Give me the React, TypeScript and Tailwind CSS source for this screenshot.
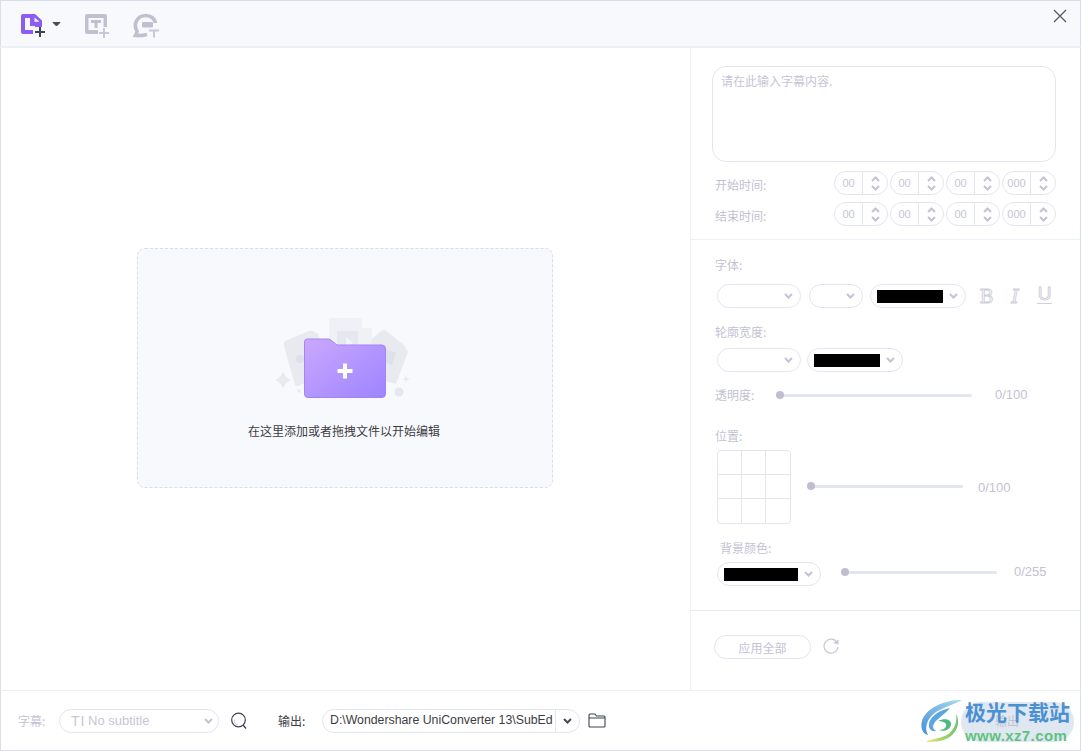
import React from "react";

const font = { fontFamily: '"Noto Sans CJK SC", "Liberation Sans", sans-serif' };
const latin = { fontFamily: '"Liberation Sans", sans-serif' };
const serif = { fontFamily: '"DejaVu Serif", serif' };

function Chevron({ color = "#c4c3d5", className = "" }: { color?: string; className?: string }) {
  return (
    <svg width="9" height="6" viewBox="0 0 9 6" className={className}>
      <path d="M1 1 L4.5 4.5 L8 1" fill="none" stroke={color} strokeWidth="2" />
    </svg>
  );
}

function TimeField({ text }: { text: string }) {
  return (
    <div className="flex h-6 w-[54px] rounded-full border border-[#e3e5f1] bg-white">
      <div style={latin} className="flex w-7 items-center justify-center border-r border-[#e3e5f1] text-[11px] text-[#c6c5d6]">{text}</div>
      <div className="flex flex-1 flex-col items-center justify-center gap-[3px]">
        <Chevron className="rotate-180" />
        <Chevron />
      </div>
    </div>
  );
}

function TimeRow({ label, labelClass }: { label: string; labelClass: string }) {
  return (
    <div className="ml-6 flex h-6 w-[341px] items-center justify-between">
      <span className={`text-xs text-[#c3c2d3] ${labelClass}`}>{label}</span>
      <div className="flex gap-0.5">
        <TimeField text="00" />
        <TimeField text="00" />
        <TimeField text="00" />
        <TimeField text="000" />
      </div>
    </div>
  );
}

function Select({ w, swatch }: { w: string; swatch?: string }) {
  return (
    <div className={`flex h-6 items-center rounded-full border border-[#e3e5f1] bg-white pl-[6px] pr-[7px] ${w}`}>
      {swatch ? <div className={`h-[13px] bg-black ${swatch}`} /> : null}
      <Chevron className="ml-auto" />
    </div>
  );
}

function Slider({ w }: { w: string }) {
  return (
    <div className={`relative h-[3px] rounded-full bg-[#e3e5f1] ${w}`}>
      <div className="absolute -left-1 -top-[2.5px] h-2 w-2 rounded-full bg-[#bfbed0]" />
    </div>
  );
}

function Illustration() {
  return (
    <svg width="140" height="84" viewBox="275 316 140 84">
      <defs>
        <linearGradient id="fg" x1="0" y1="0" x2="1" y2="1">
          <stop offset="0" stopColor="#cba8ff" />
          <stop offset="1" stopColor="#9d84ff" />
        </linearGradient>
      </defs>
      <path d="M285 341 L309 331 Q311 330 313 331 L318 334 L330 372 L298 386 Q296 387 295 385 L284 346 Q283 342 285 341Z" fill="#e8eaf0" />
      <circle cx="300" cy="359" r="4" fill="#dee0e9" />
      <path d="M329 318 H362 L372 328 V375 H329Z" fill="#eff1f7" />
      <path d="M362 318 L372 328 H362Z" fill="#f8f9fd" />
      <path d="M337 331 H358 V358 H337Z" fill="#e6e8f1" />
      <path d="M346 337 L353 343 L346 349Z" fill="#f3f4fa" />
      <path d="M372 339 Q382 329 385 330 L404 345 L408 352 L396 384 L366 376Z" fill="#e8eaf0" />
      <path d="M378 346 L396 353 L392 365 L374 358Z" fill="#dfe1ea" />
      <path d="M283 371 Q285 378 291 380 Q285 382 283 389 Q281 382 275 380 Q281 378 283 371Z" fill="#e8eaf0" />
      <circle cx="299" cy="391" r="1.7" fill="#e8eaf0" />
      <circle cx="399" cy="392" r="4.5" fill="#e5e7ee" />
      <path d="M406 375 L407 378 L410 379 L407 380 L406 383 L405 380 L402 379 L405 378Z" fill="#e8eaf0" />
      <path d="M304.5 342 Q304.5 339 307.5 339 H328 Q330 339 332 341 L337 345 H382 Q385.5 345 385.5 349 V394 Q385.5 397.5 382 397.5 H308 Q304.5 397.5 304.5 394Z" fill="url(#fg)" stroke="#a683f3" strokeWidth="1" />
      <path d="M337.5 371 H352.5 M345 363.5 V378.5" stroke="#fff" strokeWidth="4" />
    </svg>
  );
}

function Logo() {
  return (
    <svg width="44" height="44" viewBox="0 0 44 44" className="shrink-0">
      <defs>
        <linearGradient id="lb" x1="1" y1="0" x2="0" y2="1">
          <stop offset="0" stopColor="#a9dcf2" />
          <stop offset="1" stopColor="#4a8fd6" />
        </linearGradient>
        <linearGradient id="lg" x1="1" y1="0" x2="0" y2="1">
          <stop offset="0" stopColor="#56bb74" />
          <stop offset="0.65" stopColor="#9ed26b" />
          <stop offset="1" stopColor="#f0e778" />
        </linearGradient>
      </defs>
      <path d="M42 1 C24 1 6 9 2 22 C0 29 3 35 8 36 C4 29 7 19 16 13 C24 8 33 6 42 1Z" fill="url(#lb)" />
      <path d="M30 9 C20 11 10 17 9 25 C8 30 12 33 16 32 C12 30 12 25 17 21 C21 17 27 13 30 9Z" fill="#5aa5e2" />
      <path d="M36 15 C38 24 33 35 22 38 C16 40 10 40 6 43 C14 43 27 43 34 34 C39 28 39 20 36 15Z" fill="url(#lg)" />
      <path d="M18 22 C24 19 32 20 31 26 C30 31 23 33 19 31 C24 31 27 28 26 25 C25 23 21 22 18 22Z" fill="#4fb981" />
    </svg>
  );
}

export default function App() {
  return (
    <div style={font} className="relative flex h-[751px] w-[1081px] flex-col overflow-hidden bg-white">
      <div className="flex h-[48px] shrink-0 items-start border border-b-2 border-[#dcdcea] border-b-[#eef0f6] bg-[#f8f9fd]">
        <svg width="160" height="40" viewBox="0 0 160 40" className="ml-[15px] mt-[10px]">
          <g transform="translate(-16 -11)">
            <path d="M23 14 H35 L42 20.5 V27 H33 V34 H23 Q21 34 21 32 V16 Q21 14 23 14Z" fill="#8b5cf6" />
            <path d="M25 18 H30 V26 H35 V30 H25Z" fill="#f8f9fd" />
            <path d="M34.5 17.5 L39.5 21.8 H34.5Z" fill="#f8f9fd" />
            <path d="M35 32 H45 M40 27 V37" stroke="#3f4250" strokeWidth="2" />
            <path d="M53 22.5 L56.5 26 L60 22.5Z" fill="#4a4a55" stroke="#4a4a55" strokeWidth="1" />
            <rect x="85" y="14" width="22" height="20" rx="2" fill="#c1c0d1" />
            <rect x="88.5" y="18" width="15" height="12" fill="#f8f9fd" />
            <path d="M91 20 H101 V23 H97.5 V28 H94.5 V23 H91Z" fill="#c1c0d1" />
            <rect x="98" y="27" width="12" height="11" fill="#f8f9fd" />
            <path d="M99 33 H109 M104 28 V38" stroke="#c9c8d8" strokeWidth="2" />
            <path d="M147 34.5 Q141 36 135.5 35.5 Q137 33 137 31 C133 24 137 15.5 146 15.5 C151 15.5 155 19 155.5 23" fill="none" stroke="#c1c0d1" strokeWidth="3.6" />
            <rect x="142" y="22" width="11" height="5.5" rx="1" fill="#c1c0d1" />
            <path d="M149 30.5 H159 M154 30.5 V37.5" stroke="#c9c8d8" strokeWidth="2" />
          </g>
        </svg>
        <svg width="14" height="14" viewBox="0 0 14 14" className="ml-auto mr-[13px] mt-2">
          <path d="M1 1 L13 13 M13 1 L1 13" stroke="#55565f" strokeWidth="1.2" />
        </svg>
      </div>

      <div className="flex min-h-0 flex-1 border-x border-[#dcdcea]">
        <div className="flex flex-1 items-center justify-center pb-[3px] pr-[1px]">
          <div className="flex h-[240px] w-[416px] flex-col items-center rounded-lg border border-dashed border-[#dcdde9] bg-[#f8f9fd] pt-[67px]">
            <Illustration />
            <div className="mr-[2px] mt-[21px] text-xs leading-5 text-[#3c3c44]">在这里添加或者拖拽文件以开始编辑</div>
          </div>
        </div>

        <div className="flex w-[390px] shrink-0 flex-col border-l border-[#eef0f6] text-xs text-[#c3c2d3]">
          <div className="h-[192px] shrink-0 border-b border-[#eef0f6] pt-[18px]">
            <div className="ml-[21px] h-[96px] w-[344px] rounded-[14px] border border-[#e3e5f1] px-2 py-1 text-xs leading-5 text-[#c6c5d6]">请在此输入字幕内容.</div>
            <div className="mt-[9px] flex flex-col gap-[7px]">
              <TimeRow label="开始时间:" labelClass="mt-[3px]" />
              <TimeRow label="结束时间:" labelClass="mt-1" />
            </div>
          </div>

          <div className="h-[371px] shrink-0 border-b border-[#e9ebf3]">
            <div className="ml-6 mt-[16px] h-[18px] leading-[18px]">字体:</div>
            <div className="ml-[26px] mt-[10px] flex items-center">
              <Select w="w-[84px]" />
              <Select w="ml-2 w-[54px]" />
              <Select w="ml-[7px] w-24" swatch="w-[66px]" />
              <span style={serif} className="ml-[13px] w-[15px] text-center text-[19px] leading-6 text-white [-webkit-text-stroke:1px_#cfcfdc]">B</span>
              <span style={serif} className="ml-[15px] w-[12px] text-center text-[19px] italic leading-6 text-white [-webkit-text-stroke:1px_#cfcfdc]">I</span>
              <span style={latin} className="-mt-[3px] ml-[16px] w-[15px] border-b border-[#cfcfdc] text-center text-[19px] leading-[18px] text-white [-webkit-text-stroke:1px_#cfcfdc]">U</span>
            </div>
            <div className="ml-6 mt-[15px] h-[18px] leading-[18px]">轮廓宽度:</div>
            <div className="ml-[26px] mt-[7px] flex items-center">
              <Select w="w-[84px]" />
              <Select w="ml-1.5 w-24" swatch="w-[66px]" />
            </div>
            <div className="ml-6 mt-[13px] flex h-5 items-center">
              <span className="w-[65px]">透明度:</span>
              <Slider w="w-[192px]" />
              <span style={latin} className="ml-[23px] text-[13px]">0/100</span>
            </div>
            <div className="ml-6 mt-[22px] h-[18px] leading-[18px]">位置:</div>
            <div className="ml-[26px] mt-[5px] flex items-center">
              <div className="grid h-[74px] w-[74px] grid-cols-3 grid-rows-3 overflow-hidden rounded border border-[#e3e5f1]">
                {Array.from({ length: 9 }).map((_, i) => (
                  <div key={i} className={`border-[#e3e5f1] ${i % 3 !== 2 ? "border-r" : ""} ${i < 6 ? "border-b" : ""}`} />
                ))}
              </div>
              <Slider w="mb-[2px] ml-5 w-[152px]" />
              <span style={latin} className="ml-[15px] mt-0.5 text-[13px]">0/100</span>
            </div>
            <div className="ml-[29px] mt-[15px] h-[18px] leading-[18px]">背景颜色:</div>
            <div className="ml-[26px] mt-[5px] flex items-center">
              <Select w="w-[104px]" swatch="w-[74px]" />
              <Slider w="mb-1 ml-6 w-[152px]" />
              <span style={latin} className="mb-1 ml-[17px] text-[13px]">0/255</span>
            </div>
          </div>

          <div className="flex flex-1 items-start pl-[23px] pt-6">
            <div className="flex h-6 w-[97px] items-center justify-center rounded-full border border-[#e3e5f1] pt-px">应用全部</div>
            <svg width="18" height="18" viewBox="0 0 18 18" className="ml-[11px] mt-[3px]">
              <path d="M15 4.5 A7 7 0 1 0 16 9" fill="none" stroke="#c9c8d8" strokeWidth="1.2" />
              <path d="M11 5 L16.5 1.5 V6.5Z" fill="#c9c8d8" />
            </svg>
          </div>
        </div>
      </div>

      <div className="flex h-[61px] shrink-0 items-center border border-t border-[#dcdcea] border-t-[#eef0f6] pl-[17px] text-xs">
        <span className="w-[41px] text-[#c3c2d3]">字幕:</span>
        <div style={latin} className="flex h-6 w-40 items-center rounded-full border border-[#e3e5f1] pl-[11px] pr-[5px] text-[#c6c5d6]">
          <span className="w-4 text-sm font-light tracking-[1px]">TI</span>
          <span className="ml-px text-[13px]">No subtitle</span>
          <Chevron className="ml-auto" />
        </div>
        <svg width="18" height="18" viewBox="0 0 18 18" className="ml-[11px]">
          <circle cx="8.5" cy="8" r="6.8" fill="none" stroke="#3f4250" strokeWidth="1.2" />
          <path d="M13 13 L16 16.5" stroke="#3f4250" strokeWidth="1.3" />
          <path d="M4 8 Q4 12 8 13" fill="none" stroke="#c9c9d8" strokeWidth="1" />
        </svg>
        <span className="ml-[30px] w-[44px] text-[#3c3c44]">输出:</span>
        <div className="flex h-6 w-[258px] items-center rounded-full border border-[#e3e5f1]">
          <span style={latin} className="w-[232px] overflow-hidden whitespace-nowrap pl-[7px] text-[12.3px] text-[#3c3c44]">D:\Wondershare UniConverter 13\SubEd</span>
          <div className="flex h-full flex-1 items-center justify-center border-l border-[#e3e5f1]">
            <Chevron color="#4a4a55" />
          </div>
        </div>
        <svg width="18" height="15" viewBox="0 0 18 15" className="ml-[8px]">
          <path d="M1 13 V2 Q1 1 2 1 H7 L8.5 3 H16 Q17 3 17 4 V13 Q17 14 16 14 H2 Q1 14 1 13Z M1 5 H17" fill="none" stroke="#3f4250" strokeWidth="1.1" />
        </svg>
      </div>

      <div className="absolute left-[920px] top-[698px] flex items-center">
        <Logo />
        <div className="relative ml-[1px] flex flex-col">
          <div className="absolute -inset-x-1 bottom-0.5 top-1 rounded-full bg-[#dfe7f1]" />
          <span className="absolute left-[30px] top-[15px] text-xs leading-4 text-[#c3c3cf]">输出</span>
          <span style={font} className="relative text-[21px] font-bold leading-[26px] text-[#4a90d2]">极光下载站</span>
          <span style={latin} className="relative mt-1 text-[15px] font-bold leading-4 tracking-[0.4px] text-[#5fc27f]">www.xz7.com</span>
        </div>
      </div>
    </div>
  );
}
